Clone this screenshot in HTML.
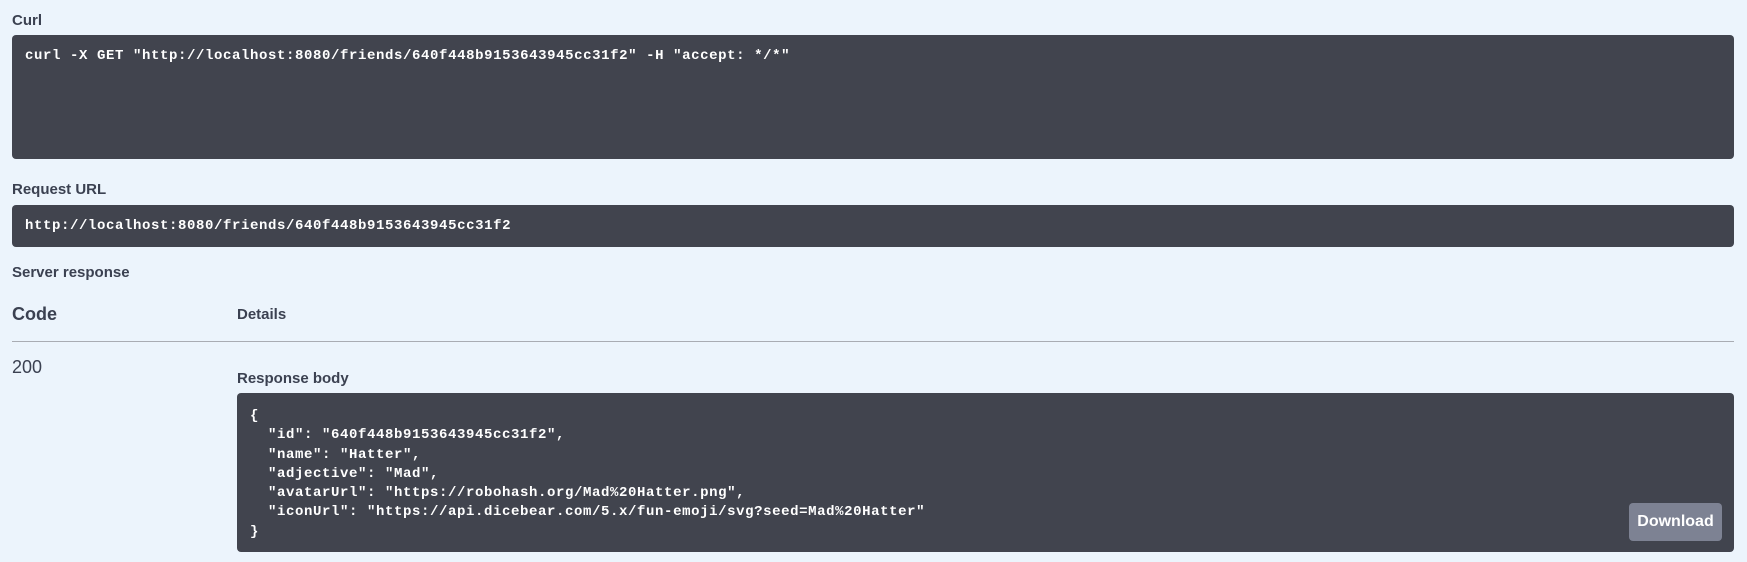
<!DOCTYPE html>
<html><head><meta charset="utf-8"><style>
html,body{margin:0;padding:0;width:1747px;height:562px;overflow:hidden;background:#ecf4fc;font-family:"Liberation Sans",sans-serif;color:#3b4151}
.lbl{position:absolute;left:12px;font-size:15px;font-weight:bold;}
.box{position:absolute;background:#41444e;border-radius:4px;color:#fff;font-family:"Liberation Mono",monospace;font-weight:bold;font-size:14px;letter-spacing:0.6px;white-space:pre;}
.line{position:absolute;left:12px;width:1722px;top:341px;height:1px;background:#a9acb3}
.btn{position:absolute;left:1629px;top:503px;width:93px;height:38px;background:#7d8293;border-radius:4px;color:#fff;font-size:16px;font-weight:bold;text-align:center;line-height:38px}
</style></head><body>
<div class="lbl" style="top:12px">Curl</div>
<div class="box" style="left:12px;top:35px;width:1722px;height:124px"><div style="position:absolute;left:13px;top:13px">curl -X GET "http://localhost:8080/friends/640f448b9153643945cc31f2" -H "accept: */*"</div></div>
<div class="lbl" style="top:181px">Request URL</div>
<div class="box" style="left:12px;top:205px;width:1722px;height:42px"><div style="position:absolute;left:13px;top:13px">http://localhost:8080/friends/640f448b9153643945cc31f2</div></div>
<div class="lbl" style="top:264px">Server response</div>
<div class="lbl" style="top:304px;font-size:18px">Code</div>
<div class="lbl" style="top:306px;left:237px">Details</div>
<div class="line"></div>
<div style="position:absolute;left:12px;top:357px;font-size:18px">200</div>
<div class="lbl" style="top:370px;left:237px">Response body</div>
<div class="box" style="left:237px;top:393px;width:1497px;height:159px;line-height:19.3px"><div style="position:absolute;left:13px;top:14px">{
  "id": "640f448b9153643945cc31f2",
  "name": "Hatter",
  "adjective": "Mad",
  "avatarUrl": "https://robohash.org/Mad%20Hatter.png",
  "iconUrl": "https://api.dicebear.com/5.x/fun-emoji/svg?seed=Mad%20Hatter"
}</div></div>
<div class="btn">Download</div>
</body></html>
